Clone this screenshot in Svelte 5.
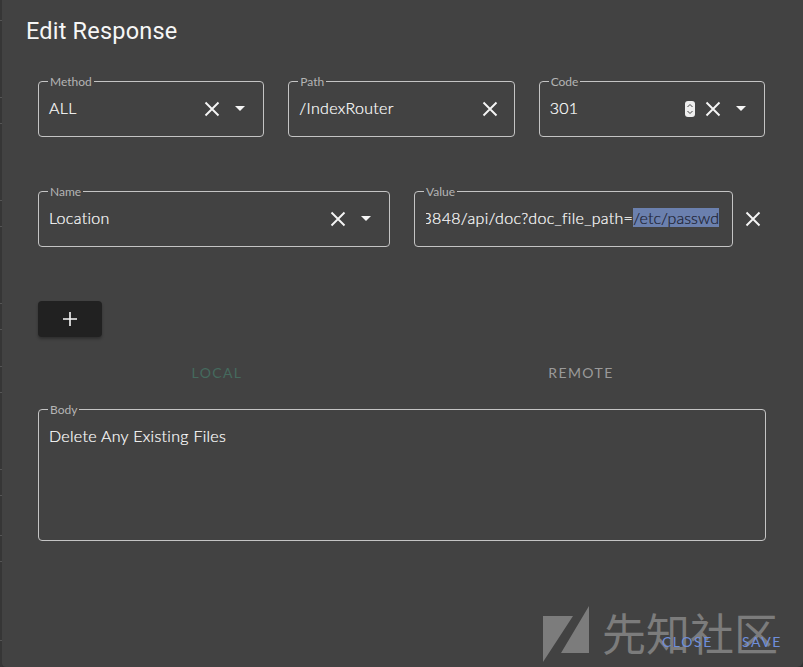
<script>
  const ticks = [20, 97, 123, 200, 226, 303, 329, 366, 392, 469, 495, 535, 561, 640];
  const top = [
    { label: 'Method', value: 'ALL', select: true },
    { label: 'Path', value: '/IndexRouter', select: false },
    { label: 'Code', value: '301', select: true, spin: true }
  ];
</script>

{#snippet close()}
  <svg class="x" viewBox="0 0 16 16" width="16" height="16"><path d="M1.5 1.5 14.5 14.5M14.5 1.5 1.5 14.5" /></svg>
{/snippet}

{#snippet caret()}
  <svg class="caret" viewBox="0 0 10 5" width="10" height="5"><path d="M0 0h10L5 5z" /></svg>
{/snippet}

<div class="page">
  <div class="edge">
    {#each ticks as t}<i style="top:{t}px"></i>{/each}
  </div>
  <div class="dialog">
    <h2>Edit Response</h2>

    <div class="row top">
      {#each top as f}
        <fieldset class="field">
          <legend>{f.label}</legend>
          <span class="val">{f.value}</span>
          {#if f.spin}
            <svg class="spin" viewBox="0 0 10 16" width="10" height="16">
              <rect width="10" height="16" rx="3" fill="#eee" />
              <path d="M2.5 6 5 3.5 7.5 6M2.5 10 5 12.5 7.5 10" fill="none" stroke="#444" stroke-width="1" />
            </svg>
          {/if}
          <span class="close {f.spin ? 'tight' : ''} {f.select ? '' : 'solo'}">{@render close()}</span>
          {#if f.select}<span class="drop">{@render caret()}</span>{/if}
        </fieldset>
      {/each}
    </div>

    <div class="row second">
      <fieldset class="field name">
        <legend>Name</legend>
        <span class="val">Location</span>
        <span class="close">{@render close()}</span>
        <span class="drop">{@render caret()}</span>
      </fieldset>
      <fieldset class="field value">
        <legend>Value</legend>
        <span class="clip"><span class="val">3848/api/doc?doc_file_path=<mark>/etc/passwd</mark></span></span>
      </fieldset>
      <span class="rm">{@render close()}</span>
    </div>

    <button class="add" aria-label="Add">
      <svg viewBox="0 0 14 14" width="14" height="14"><path d="M7 0v14M0 7h14" /></svg>
    </button>

    <div class="tabs">
      <span class="local">LOCAL</span>
      <span class="remote">REMOTE</span>
    </div>

    <fieldset class="field body">
      <legend>Body</legend>
      <span class="val">Delete Any Existing Files</span>
    </fieldset>

    <div class="actions">
      <span class="close-btn">CLOSE</span>
      <span>SAVE</span>
    </div>
  </div>

  <div class="mark" aria-hidden="true">
    <svg viewBox="0 0 48 57" width="48" height="57">
      <path d="M0 10H30L0 56zM46 0V47H18z" fill="#7c7c7c" />
    </svg>
    <span>先知社区</span>
  </div>
</div>

<style>
  :global(body) {
    margin: 0;
    background: #333;
  }
  .page {
    position: relative;
    width: 803px;
    height: 667px;
    overflow: hidden;
    display: flex;
    font-family: Lato, "Noto Sans", sans-serif;
    color: #f2f2f2;
  }
  .edge {
    position: relative;
    width: 2px;
    flex: none;
    background: #363636;
  }
  .edge i {
    position: absolute;
    left: 0;
    width: 2px;
    height: 1px;
    background: #555;
  }
  .dialog {
    flex: 1;
    height: 667px;
    box-sizing: border-box;
    background: #424242;
    border-radius: 0 0 6px 4px;
    padding: 0 37px 0 36px;
    display: flex;
    flex-direction: column;
    position: relative;
  }
  h2 {
    margin: 17px 0 0 -12px;
    font: 400 23.5px/28px Roboto, sans-serif;
    letter-spacing: 0.2px;
    color: #f6f6f6;
    height: 28px;
  }
  .row {
    display: flex;
    align-items: flex-start;
  }
  .top {
    margin-top: 30px;
    gap: 24px;
    width: 727px;
  }
  .top .field {
    flex: 1;
  }
  .second {
    margin-top: 48px;
    gap: 24px;
  }
  .field {
    box-sizing: border-box;
    height: 62px;
    margin: 0;
    padding: 9px 11px 0 10px;
    min-width: 0;
    border: 1px solid #c4c4c4;
    border-radius: 4px;
    display: flex;
    align-items: flex-start;
    font-size: 16px;
    font-weight: 300;
    line-height: 22px;
  }
  legend {
    margin-left: -1px;
    padding: 0 2px;
    font-size: 12px;
    line-height: 12px;
    color: #b4b4b4;
    position: relative;
    top: 1px;
    font-weight: 400;
  }
  .val {
    flex: 1;
    white-space: nowrap;
    color: #fff;
    position: relative;
    top: 1px;
    letter-spacing: 0.3px;
    -webkit-text-stroke: 0.2px #fff;
  }
  .close {
    width: 16px;
    height: 16px;
    margin: 5px 0 0;
  }
  .close.tight {
    margin-left: 10px;
  }
  .close.solo {
    margin-right: 5px;
  }
  .drop {
    width: 10px;
    height: 5px;
    margin: 10px 7px 0 15px;
    display: block;
  }
  .x {
    display: block;
    fill: none;
    stroke: #f5f5f5;
    stroke-width: 1.9;
  }
  .caret {
    display: block;
    fill: #f5f5f5;
  }
  .spin {
    margin-top: 5px;
  }
  .name {
    width: 352px;
    flex: none;
  }
  .value {
    width: 319px;
    flex: none;
    padding-left: 11px;
  }
  .value legend {
    margin-left: -2px;
  }
  .clip {
    flex: 1;
    overflow: hidden;
    display: flex;
    justify-content: flex-end;
    height: 24px;
    padding-right: 2px;
  }
  .clip .val {
    flex: none;
  }
  mark {
    background: #6b80ae;
    color: #1b2030;
    padding: 0;
    letter-spacing: 0.05px;
    -webkit-text-stroke: 0.2px #1b2030;
  }
  .rm {
    margin: 26px 0 0 -12px;
  }
  .add {
    margin-top: 54px;
    width: 64px;
    height: 36px;
    padding: 0;
    border: 0;
    border-radius: 4px;
    background: #212121;
    box-shadow: 0 2px 3px rgba(0, 0, 0, 0.3);
    display: flex;
    align-items: center;
    justify-content: center;
  }
  .add svg {
    fill: none;
    stroke: #f7f7f7;
    stroke-width: 1.6;
  }
  .tabs {
    margin: 26px 0 0 -3px;
    width: 728px;
    display: flex;
    font-size: 14px;
    line-height: 20px;
    letter-spacing: 1.4px;
    height: 20px;
  }
  .tabs span {
    flex: 1;
    text-align: center;
  }
  .local {
    color: #456a5e;
  }
  .remote {
    color: #9a9a9a;
  }
  .body {
    margin-top: 20px;
    width: 728px;
    height: 138px;
    flex: none;
    padding-top: 9px;
    padding-left: 10px;
  }
  .actions {
    margin-top: 91px;
    margin-right: -16px;
    display: flex;
    justify-content: flex-end;
    gap: 29px;
    font-size: 14px;
    line-height: 20px;
    letter-spacing: 1.6px;
    color: #6f8fdc;
    position: relative;
    z-index: 2;
  }
  .mark {
    position: absolute;
    left: 543px;
    top: 606px;
    display: flex;
    align-items: flex-start;
    gap: 11px;
    color: #7c7c7c;
  }
  .mark span {
    font: 400 44px/50px "Noto Sans CJK SC", sans-serif;
    margin-top: 1px;
    white-space: nowrap;
  }
</style>
